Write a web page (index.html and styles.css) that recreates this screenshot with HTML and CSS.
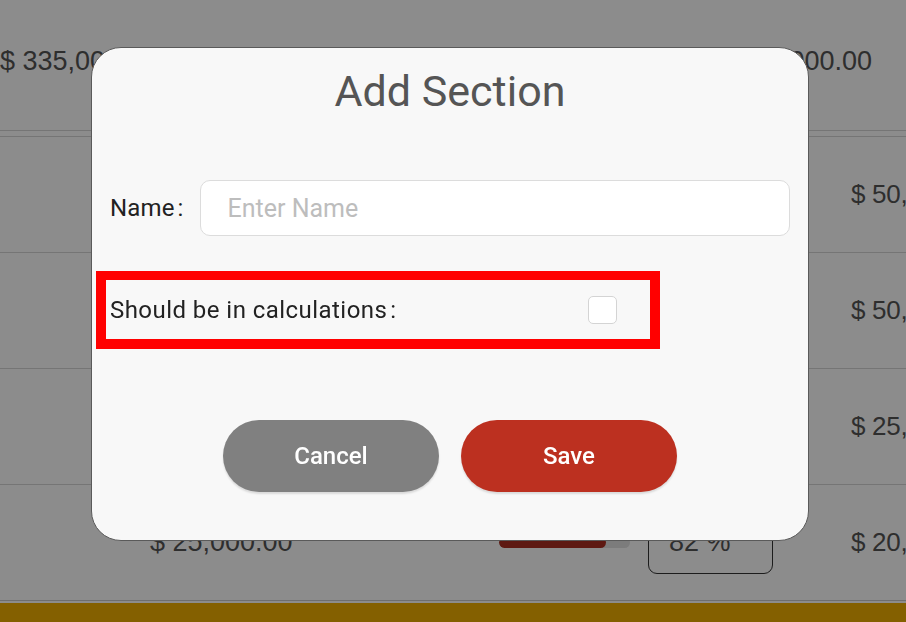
FILE: index.html
```html
<!DOCTYPE html>
<html lang="en">
<head>
<meta charset="utf-8">
<title>Add Section</title>
<link rel="stylesheet" href="styles.css">
</head>
<body>
<div class="page">
  <div class="totals">
    <span class="amount">$ 335,000.00</span>
    <span class="amount">$ 300,000.00</span>
  </div>
  <div class="rows">
    <div class="row">
      <span class="amount">$ 50,000.00</span>
      <div class="track"><div class="fill" style="width: 60%"></div></div>
      <div class="pct">40 %</div>
      <span class="amount amount-end">$ 50,000.00</span>
    </div>
    <div class="row">
      <span class="amount">$ 50,000.00</span>
      <div class="track"><div class="fill" style="width: 60%"></div></div>
      <div class="pct">50 %</div>
      <span class="amount amount-end">$ 50,000.00</span>
    </div>
    <div class="row">
      <span class="amount">$ 25,000.00</span>
      <div class="track"><div class="fill" style="width: 70%"></div></div>
      <div class="pct">70 %</div>
      <span class="amount amount-end">$ 25,000.00</span>
    </div>
    <div class="row">
      <span class="amount">$ 25,000.00</span>
      <div class="track"><div class="fill" style="width: 82%"></div></div>
      <div class="pct">82 %</div>
      <span class="amount amount-end">$ 20,000.00</span>
    </div>
  </div>
  <div class="footer-bar"></div>
</div>

<div class="overlay"></div>

<div class="modal">
  <h2 class="modal-title">Add Section</h2>
  <div class="field-row">
    <label class="field-label" for="name">Name<span class="colon">:</span></label>
    <input class="text-input" id="name" type="text" placeholder="Enter Name">
  </div>
  <div class="check-row">
    <label class="field-label check-label" for="calc">Should be in calculations<span class="colon">:</span></label>
    <input class="checkbox" id="calc" type="checkbox">
  </div>
  <div class="actions">
    <button class="btn btn-cancel" type="button">Cancel</button>
    <button class="btn btn-save" type="button">Save</button>
  </div>
</div>
</body>
</html>
```

FILE: styles.css
```css
* { box-sizing: border-box; }

html, body {
  margin: 0;
  padding: 0;
  width: 906px;
  height: 622px;
  overflow: hidden;
  background: #ffffff;
}

.page {
  width: 906px;
  height: 622px;
  overflow: hidden;
  display: flex;
  flex-direction: column;
  font-family: "Liberation Sans", Arial, sans-serif;
  color: #555555;
}

.amount {
  font-size: 27px;
  white-space: nowrap;
}

.amount-end {
  font-size: 26px;
  letter-spacing: -0.3px;
}

.totals {
  height: 131px;
  display: flex;
  justify-content: space-between;
  align-items: center;
  padding: 0 34px 8px 0;
  border-bottom: 1px solid #d6d6d6;
}

.rows {
  margin-top: 5px;
  border-top: 1px solid #d6d6d6;
  flex: 1;
}

.row {
  height: 116px;
  display: grid;
  grid-template-columns: 349px 149px 203px auto;
  align-items: center;
  padding-left: 150px;
  border-bottom: 1px solid #d6d6d6;
  overflow: hidden;
}

.row:last-child {
  border-bottom: 1px solid #c8c8c8;
}

.track {
  width: 131px;
  height: 11px;
  border-radius: 6px;
  background: #e2e2e2;
  overflow: hidden;
}

.fill {
  height: 100%;
  border-radius: 6px;
  background: #ab2f21;
}

.pct {
  width: 125px;
  height: 56px;
  margin-top: 6px;
  border: 1px solid #333;
  border-radius: 9px;
  display: flex;
  align-items: center;
  padding-left: 20px;
  padding-bottom: 6px;
  font-size: 27px;
  color: #555;
}

.footer-bar {
  height: 19px;
  background: #f0b000;
}

.overlay {
  position: fixed;
  inset: 0;
  background: rgba(0, 0, 0, 0.45);
}

.modal {
  position: fixed;
  left: 91px;
  top: 47px;
  width: 718px;
  height: 494px;
  background: #f8f8f8;
  border: 1px solid #5a5a5a;
  border-radius: 30px;
  padding: 18px 18px 0 18px;
  display: flex;
  flex-direction: column;
  font-family: Roboto, "Liberation Sans", Arial, sans-serif;
}

.modal-title {
  margin: 0;
  height: 50px;
  line-height: 50px;
  text-align: center;
  font-size: 43px;
  font-weight: 400;
  color: #555555;
}

.field-row {
  margin-top: 64px;
  display: flex;
  align-items: center;
  height: 56px;
}

.field-label {
  font-size: 24px;
  letter-spacing: 0.15px;
  color: #222222;
  white-space: nowrap;
}

.check-label {
  letter-spacing: 0.45px;
}

.colon {
  margin-left: 3px;
}

.text-input {
  margin-left: 16px;
  flex: 1;
  height: 56px;
  border: 1px solid #dcdcdc;
  border-radius: 10px;
  background: #ffffff;
  padding: 0 27px;
  font-family: Roboto, "Liberation Sans", Arial, sans-serif;
  font-size: 25px;
  color: #222;
  outline: none;
}

.text-input::placeholder {
  color: #bdbdbd;
}

.check-row {
  margin-top: 35px;
  margin-left: -14px;
  width: 564px;
  height: 78px;
  border: 10px solid #ff0000;
  border-top-width: 9px;
  display: flex;
  align-items: center;
  padding: 0 33px 0 4px;
}

.checkbox {
  margin: 0 0 0 auto;
  width: 29px;
  height: 28px;
  appearance: none;
  -webkit-appearance: none;
  background: #ffffff;
  border: 1.5px solid #d4d4d4;
  border-radius: 5px;
}

.actions {
  margin-top: 71px;
  display: flex;
  justify-content: center;
  gap: 22px;
}

.btn {
  width: 216px;
  height: 72px;
  border: none;
  border-radius: 36px;
  font-family: Roboto, "Liberation Sans", Arial, sans-serif;
  font-size: 24px;
  font-weight: 500;
  color: #ffffff;
  box-shadow: 0 2px 2px rgba(0, 0, 0, 0.12);
}

.btn-cancel { background: #808080; }
.btn-save { background: #bc3020; }
```
